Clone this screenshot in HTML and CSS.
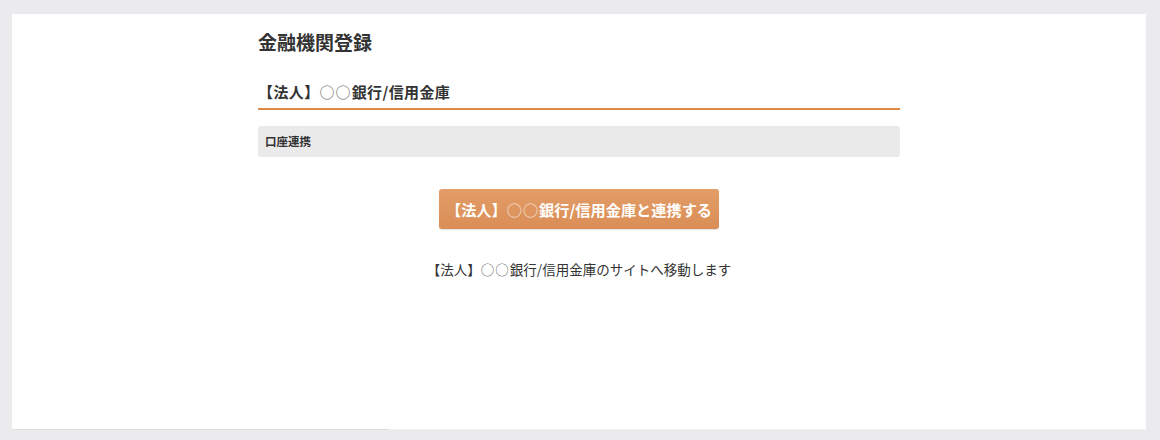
FILE: index.html
```html
<!DOCTYPE html>
<html lang="ja">
<head>
<meta charset="utf-8">
<title>金融機関登録</title>
<link rel="stylesheet" href="styles.css">
</head>
<body>
<div class="frame">
  <main class="panel">
    <div class="content">
      <h1 class="title">金融機関登録</h1>
      <h2 class="bank">【法人】<span class="maru">○○</span>銀行/信用金庫</h2>
      <div class="section-bar">口座連携</div>
      <div class="action">
        <button class="link-btn" type="button">【法人】<span class="maru">○○</span>銀行/信用金庫と連携する</button>
        <p class="note">【法人】<span class="maru">○○</span>銀行/信用金庫のサイトへ移動します</p>
      </div>
    </div>
  </main>
  <div class="panel-edge"></div>
</div>
</body>
</html>
```

FILE: styles.css
```css
* { box-sizing: border-box; }

html, body {
  margin: 0;
  padding: 0;
  background: #ebebed;
  width: 1160px;
  height: 440px;
  overflow: hidden;
  font-family: "Noto Sans CJK JP", "Noto Sans", sans-serif;
  color: #333333;
}

.frame {
  padding: 14px 14px 0 12px;
  display: flex;
  flex-direction: column;
}

.panel {
  background: #ffffff;
  height: 415px;
  padding-top: 14px;
}

.panel-edge {
  height: 1px;
  background: linear-gradient(to right, #dedede 0, #dedede 377px, #f2f2f3 377px, #f2f2f3 100%);
}

.content {
  width: 642px;
  margin-left: 246px;
}

.title {
  margin: 0;
  font-size: 19px;
  line-height: 28px;
  font-weight: 700;
  color: #333333;
}

.bank {
  margin: 24px 0 0;
  font-size: 15px;
  letter-spacing: 0.4px;
  line-height: 24px;
  font-weight: 700;
  color: #333333;
  padding-bottom: 4px;
  border-bottom: 2px solid #e08a48;
}

.maru {
  font-weight: 400;
  opacity: 0.75;
  letter-spacing: 1px;
}

.section-bar {
  margin-top: 16px;
  height: 31px;
  background: #ebeaeb;
  border-radius: 3px;
  padding-left: 7px;
  font-size: 11.5px;
  font-weight: 700;
  line-height: 31px;
  color: #333333;
}

.action {
  display: flex;
  flex-direction: column;
  align-items: center;
  margin-top: 32px;
}

.link-btn {
  height: 40px;
  width: 280px;
  padding: 0;
  border: none;
  border-radius: 3px;
  background: linear-gradient(to bottom, #e39d68, #da8e56);
  box-shadow: 0 1px 1px rgba(0, 0, 0, 0.12);
  color: #ffffff;
  font-family: "Noto Sans CJK JP", "Noto Sans", sans-serif;
  font-size: 15.2px;
  font-weight: 700;
  line-height: 40px;
  white-space: nowrap;
  cursor: pointer;
}

.note {
  margin: 30px 0 0;
  font-size: 13.5px;
  line-height: 20px;
  color: #333333;
  white-space: nowrap;
}
```
